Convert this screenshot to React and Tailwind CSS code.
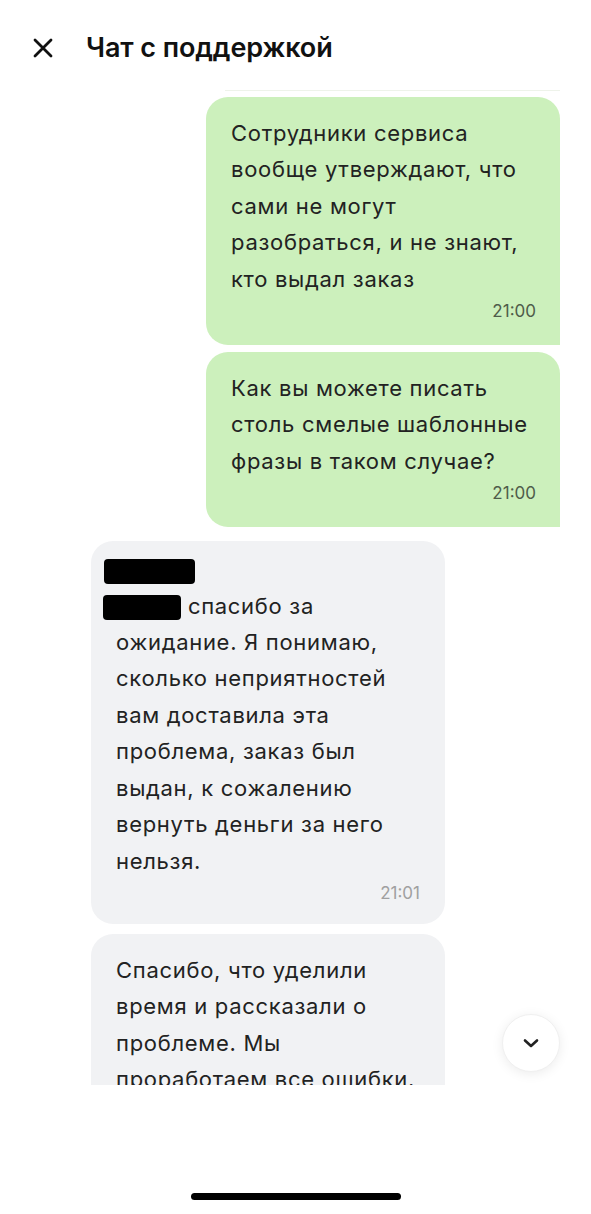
import React from "react";

const font = { fontFamily: "Inter, 'Noto Sans', sans-serif" };

function Lines({ lines }) {
  return lines.map((l, i) => (
    <div key={i} className="whitespace-nowrap">
      {l}
    </div>
  ));
}

function OutBubble({ lines, time, className = "" }) {
  return (
    <div
      className={`ml-auto mr-[31px] w-[354px] bg-[#ccf0bc] rounded-[22px] rounded-br-none pl-[25px] pr-[24px] pt-[18px] pb-[24px] ${className}`}
    >
      <div className="text-[22px] leading-[36.4px] tracking-[0.7px] text-[#222]">
        <Lines lines={lines} />
      </div>
      <div className="mt-[4px] h-[20px] text-right text-[17px] leading-[20px] text-[#4f5c4a]">
        {time}
      </div>
    </div>
  );
}

function Redact({ w }) {
  return (
    <span
      className={`inline-block align-middle h-[25px] bg-black rounded-[4px] blur-[0.7px] ${w}`}
    />
  );
}

export default function App() {
  return (
    <div
      className="w-[591px] h-[1214px] bg-white relative overflow-hidden"
      style={font}
    >
      <div className="h-[90px] flex items-center pt-[6px] pl-[33px]">
        <svg width="20" height="20" viewBox="0 0 20 20" className="shrink-0">
          <path
            d="M2 2 L18 18 M18 2 L2 18"
            stroke="#111"
            strokeWidth="2.8"
            strokeLinecap="round"
          />
        </svg>
        <h1 className="ml-[33px] text-[27px] font-semibold text-[#111] tracking-[-0.1px]">
          Чат с поддержкой
        </h1>
      </div>
      <div className="h-px ml-[225px] mr-[31px] bg-[#eef3ea]" />

      <div className="h-[994px] overflow-hidden">
        <OutBubble
          className="mt-[6px]"
          lines={[
            "Сотрудники сервиса",
            "вообще утверждают, что",
            "сами не могут",
            "разобраться, и не знают,",
            "кто выдал заказ",
          ]}
          time="21:00"
        />
        <OutBubble
          className="mt-[7px]"
          lines={[
            "Как вы можете писать",
            "столь смелые шаблонные",
            "фразы в таком случае?",
          ]}
          time="21:00"
        />

        <div className="mt-[14px] ml-[91px] w-[354px] bg-[#f1f2f4] rounded-[22px] pl-[25px] pr-[25px] pt-[10px] pb-[21px]">
          <div className="text-[22px] leading-[36.4px] tracking-[0.7px] text-[#222]">
            <div className="ml-[-12px]">
              <Redact w="w-[91px]" />
            </div>
            <div className="whitespace-nowrap ml-[-13px]">
              <Redact w="w-[78px]" /> спасибо за
            </div>
            <Lines
              lines={[
                "ожидание. Я понимаю,",
                "сколько неприятностей",
                "вам доставила эта",
                "проблема, заказ был",
                "выдан, к сожалению",
                "вернуть деньги за него",
                "нельзя.",
              ]}
            />
          </div>
          <div className="mt-[4px] h-[20px] text-right text-[17px] leading-[20px] text-[#a0a0a0]">
            21:01
          </div>
        </div>

        <div className="mt-[10px] ml-[91px] w-[354px] bg-[#f1f2f4] rounded-[22px] pl-[25px] pr-[25px] pt-[18px] pb-[24px]">
          <div className="text-[22px] leading-[36.4px] tracking-[0.7px] text-[#222]">
            <Lines
              lines={[
                "Спасибо, что уделили",
                "время и рассказали о",
                "проблеме. Мы",
                "проработаем все ошибки.",
              ]}
            />
          </div>
        </div>
      </div>

      <button className="absolute left-[502px] top-[1014px] w-[58px] h-[58px] rounded-full bg-white border border-[#f0f0f0] shadow-[0_2px_12px_rgba(0,0,0,0.08)] flex items-center justify-center">
        <svg width="18" height="11" viewBox="0 0 18 11">
          <path
            d="M3 2.5 L9 8 L15 2.5"
            fill="none"
            stroke="#222"
            strokeWidth="2.6"
            strokeLinecap="round"
            strokeLinejoin="round"
          />
        </svg>
      </button>

      <div className="flex justify-center pt-[108px]">
        <div className="w-[210px] h-[7px] rounded-full bg-black" />
      </div>
    </div>
  );
}
